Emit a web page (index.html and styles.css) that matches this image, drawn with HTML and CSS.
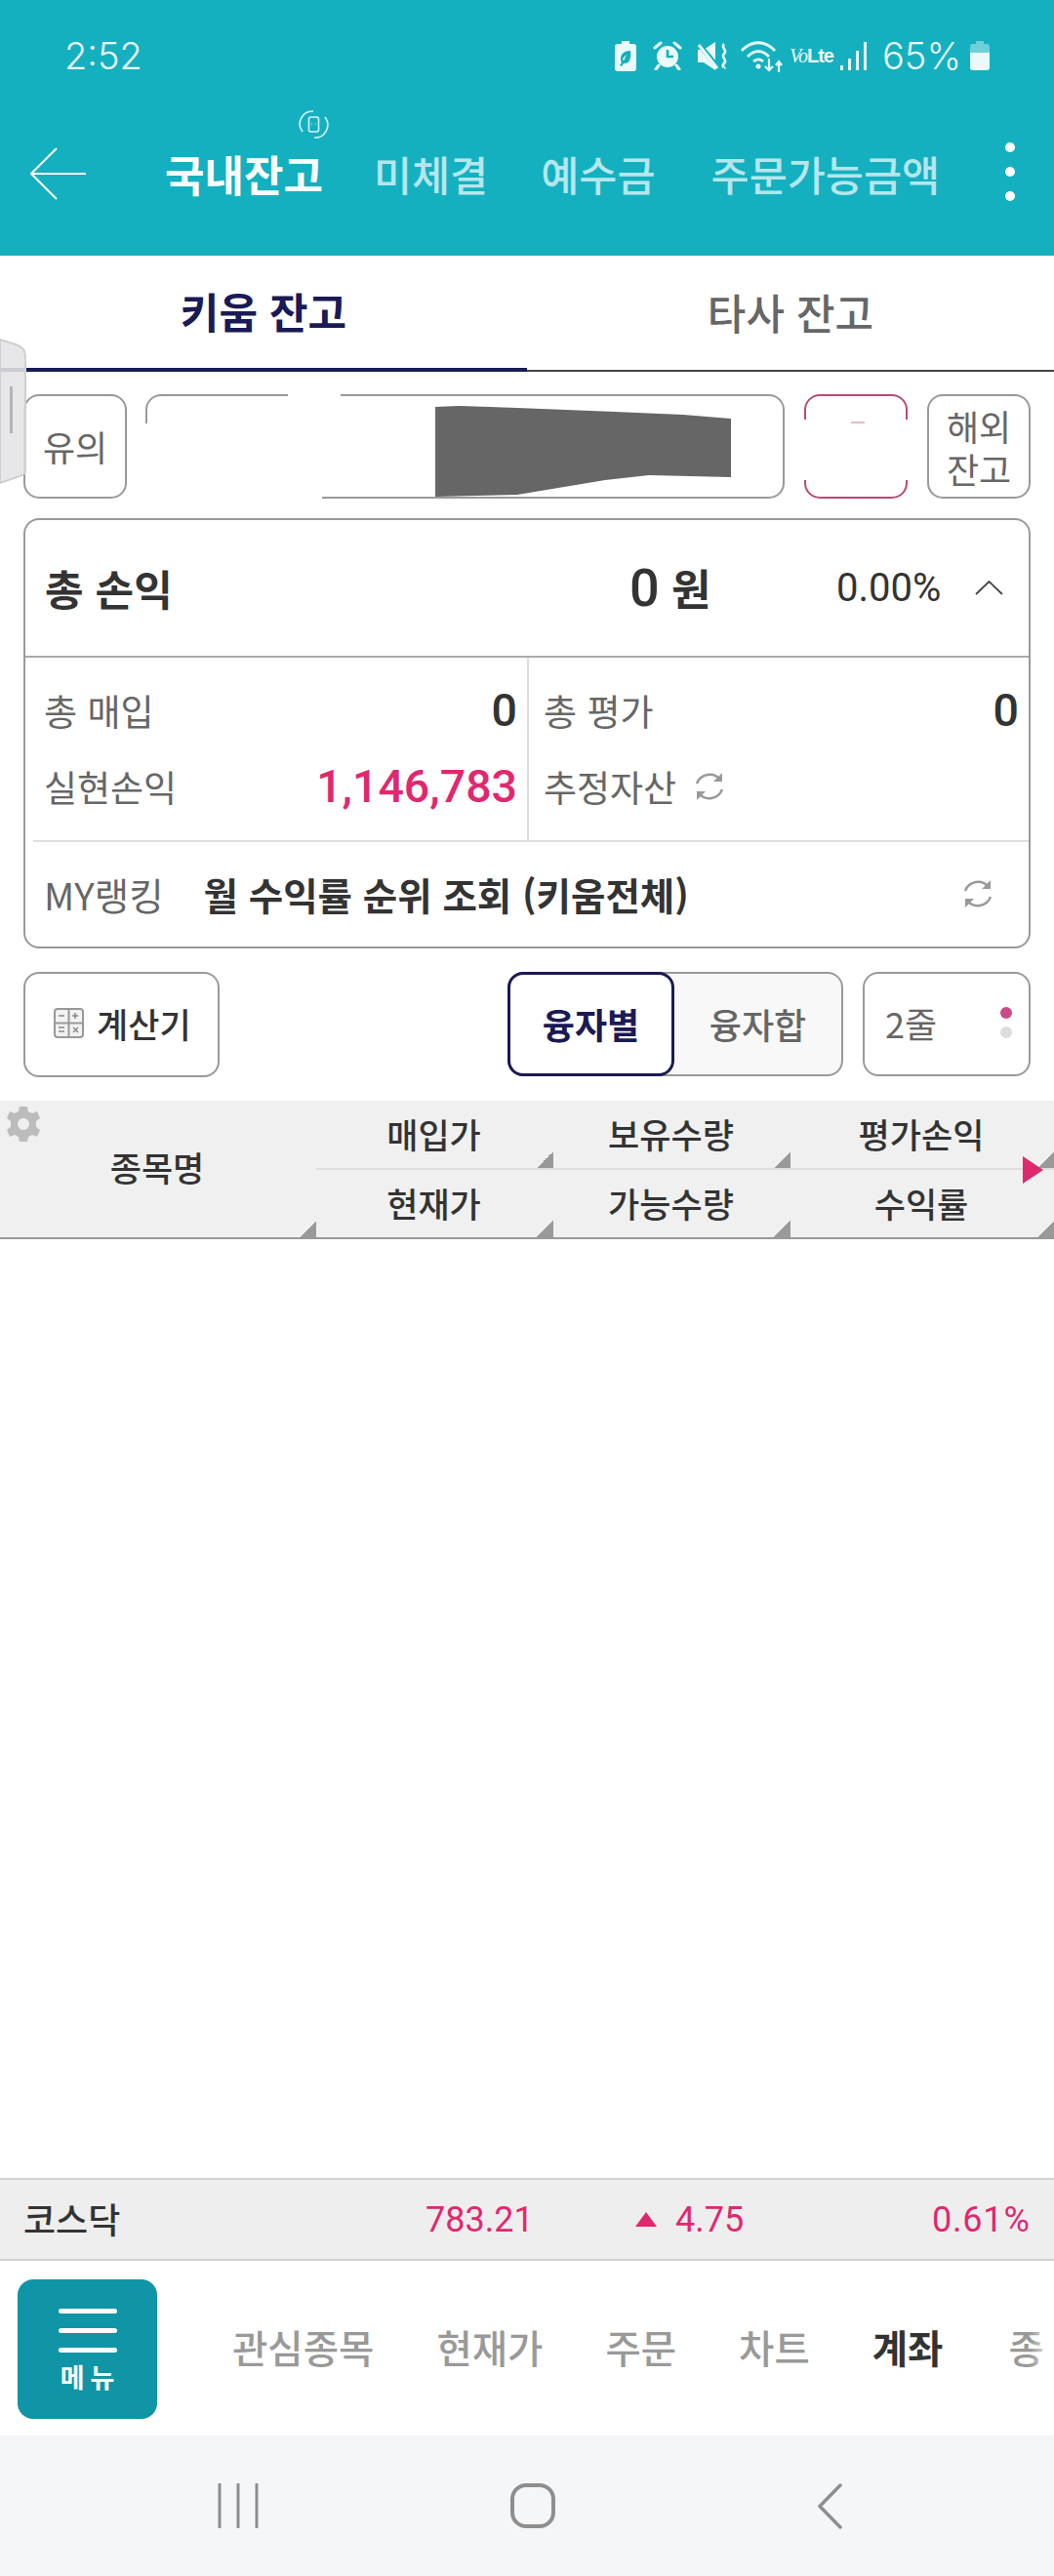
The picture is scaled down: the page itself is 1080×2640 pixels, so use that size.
FILE: index.html
```html
<!DOCTYPE html>
<html lang="ko">
<head>
<meta charset="utf-8">
<title>국내잔고</title>
<link rel="stylesheet" href="styles.css">
</head>
<body>
<div class="app">
  <header class="top">
    <div class="status">
      <span class="clock">2:52</span>
      <div class="status-icons">
        <svg class="si-batt" width="22" height="31" viewBox="0 0 22 31"><path fill="#eafafb" d="M7 0h8v3h4a3 3 0 0 1 3 3v22a3 3 0 0 1-3 3H3a3 3 0 0 1-3-3V6a3 3 0 0 1 3-3h4z"/><path fill="#14b0c0" d="M16 10c-6 0-10 3-10 8 0 1 0 3 1 4l-2 3 2 1 2-3c6 1 8-5 7-13z"/><path fill="#eafafb" d="M13 14c-3 1-5 3-5 6l2-1c0-2 1-4 3-5z"/></svg>
        <svg class="si-alarm" width="30" height="30" viewBox="0 0 30 30"><circle cx="15" cy="16" r="11" fill="#eafafb"/><path d="M15 9v7h6" fill="none" stroke="#14b0c0" stroke-width="2.6"/><path d="M2 7l6-5M28 7l-6-5M6 25l-3 4M24 25l3 4" stroke="#eafafb" stroke-width="3" fill="none" stroke-linecap="round"/></svg>
        <svg class="si-mute" width="30" height="29" viewBox="0 0 30 29"><path fill="#eafafb" d="M0 8h6L18 0v29L6 21H0z"/><path d="M0 1l21 25" stroke="#14b0c0" stroke-width="5"/><path d="M1 3l19 24" stroke="#eafafb" stroke-width="3"/><path d="M27 2c-4 4 4 6 0 10s4 6 0 10 2 4 0 5" fill="none" stroke="#eafafb" stroke-width="2.6"/></svg>
        <svg class="si-wifi" width="43" height="33" viewBox="0 0 43 33"><g fill="none" stroke="#eafafb" stroke-width="2.8"><path d="M1 11c10-11 24-11 34 0"/><path d="M7 17c7-7 15-7 22 0"/><path d="M13 22c4-3 7-3 10 0"/></g><circle cx="18" cy="27" r="2.5" fill="#eafafb"/><path d="M29 19v12m-4-4l4 4 4-4M39 33V22m-3 4l3-4 3 4" fill="none" stroke="#eafafb" stroke-width="2.2"/></svg>
        <span class="volte"><i>Vo</i><b>Lte</b></span>
        <svg class="si-signal" width="28" height="29" viewBox="0 0 28 29"><rect x="0" y="24" width="3" height="5" fill="#eafafb"/><rect x="8" y="17" width="3" height="12" fill="#eafafb"/><rect x="16" y="9" width="3" height="20" fill="#eafafb"/><rect x="24" y="0" width="3" height="29" fill="#eafafb"/></svg>
        <span class="pct">65%</span>
        <svg class="si-level" width="20" height="30" viewBox="0 0 20 30"><path fill="#6fd0da" d="M6 0h8v3h3a3 3 0 0 1 3 3v6H0V6a3 3 0 0 1 3-3h3z"/><path fill="#eafafb" d="M0 12h20v15a3 3 0 0 1-3 3H3a3 3 0 0 1-3-3z"/></svg>
      </div>
    </div>
    <nav class="nav">
      <svg class="back" width="57" height="54" viewBox="0 0 57 54"><path d="M27 1L1 27l26 26M1 27h56" fill="none" stroke="#fff" stroke-width="2"/></svg>
      <a class="nav-item on">국내잔고</a>
      <a class="nav-item">미체결</a>
      <a class="nav-item n3">예수금</a>
      <a class="nav-item">주문가능금액</a>
      <div class="kebab"><i></i><i></i><i></i></div>
    </nav>
    <svg class="rotate" width="31" height="29" viewBox="0 0 31 29"><g fill="none" stroke="#d8f3f6" stroke-width="1.6"><path d="M4 22A13 13 0 0 1 15 1"/><path d="M27 7a13 13 0 0 1-11 21"/><rect x="10.500" y="7" width="10" height="15" rx="2"/></g><path d="M13 14h1M17 14h1" stroke="#d8f3f6"/></svg>
  </header>

  <div class="tabs">
    <div class="tab on">키움 잔고</div>
    <div class="tab">타사 잔고</div>
  </div>

  <div class="handle"><svg width="28" height="150" viewBox="0 0 28 150"><path d="M0 1l16 5q10 3 10 12v118q0 3-6 5L0 148z" fill="#e4e4e6" fill-opacity=".88" stroke="#cfcfcf" stroke-width="2"/><rect x="10" y="49" width="3" height="48" fill="#b4b4b4"/></svg></div>

  <main class="content">
    <div class="acct-row">
      <button class="btn b-warn">유의</button>
      <div class="acct">
        <svg class="redact" width="659" height="115" viewBox="0 0 659 115"><path fill="#fff" d="M146 0h54v14h-54zM0 30h8v44H0zM0 86h181v29H0zM0 74h100v14H0z"/><path fill="#666" d="M297 13l24-1 60 2 100 4 70 3 49 4v60l-84-2-45 5-90 15-84 2z"/></svg>
      </div>
      <div class="red-box"><i class="red-mask"></i><i class="red-dash"></i></div>
      <button class="btn b-abroad">해외<br>잔고</button>
    </div>

    <section class="card">
      <div class="card-head">
        <span class="total-label">총 손익</span>
        <span class="total-val"><b>0</b> 원</span>
        <span class="total-pct">0.00%</span>
        <svg class="caret" width="29" height="15" viewBox="0 0 29 15"><path d="M1 14L14.500 1 28 14" fill="none" stroke="#444" stroke-width="1.800"/></svg>
      </div>
      <div class="card-grid">
        <div class="cell">
          <div class="line"><span class="lab">총 매입</span><b class="num">0</b></div>
          <div class="line"><span class="lab">실현손익</span><b class="num pink">1,146,783</b></div>
        </div>
        <div class="cell cell-r">
          <div class="line"><span class="lab">총 평가</span><b class="num">0</b></div>
          <div class="line"><span class="lab">추정자산</span>
            <svg class="refresh-s" width="34" height="32" viewBox="0 0 34 32"><g fill="none" stroke="#999" stroke-width="2.400"><path d="M4 13A14 14 0 0 1 28 9"/><path d="M30 19A14 14 0 0 1 6 23"/></g><path d="M30 2v9h-9zM4 30v-9h9z" fill="#999"/></svg>
            <span class="spacer"></span>
          </div>
        </div>
      </div>
      <div class="rank">
        <span class="lab lab-my">MY랭킹</span>
        <b class="rank-text">월 수익률 순위 조회 (키움전체)</b>
        <svg class="refresh" width="34" height="32" viewBox="0 0 34 32"><g fill="none" stroke="#999" stroke-width="2.400"><path d="M4 13A14 14 0 0 1 28 9"/><path d="M30 19A14 14 0 0 1 6 23"/></g><path d="M30 2v9h-9zM4 30v-9h9z" fill="#999"/></svg>
      </div>
    </section>

    <div class="tools">
      <button class="btn b-calc">
        <svg width="31" height="31" viewBox="0 0 31 31"><rect x="1" y="1" width="29" height="29" rx="3" fill="#f2f2f2" stroke="#999" stroke-width="2"/><path d="M1 15.500h29M15.500 1v29" stroke="#999" stroke-width="2"/><path d="M5 8h6M19 8h6M22 5v6M5 20h6M5 24h6M20 20l5 5M25 20l-5 5" stroke="#888" stroke-width="1.500"/></svg>
        계산기
      </button>
      <div class="seg">
        <div class="seg-on">융자별</div>
        <div class="seg-off">융자합</div>
      </div>
      <div class="lines-btn">
        <span>2줄</span>
        <div class="pager"><i class="p-on"></i><i></i></div>
      </div>
    </div>
  </main>

  <div class="thead">
    <svg class="gear" width="34" height="36" viewBox="0 0 34 36"><path fill="#bcbcbc" fill-rule="evenodd" d="M13 0h8l1 5 4 2 5-2 3 7-4 3v6l4 3-3 7-5-2-4 2-1 5h-8l-1-5-4-2-5 2-3-7 4-3v-6L0 12l3-7 5 2 4-2zM17 12a6 6 0 1 0 0 12 6 6 0 0 0 0-12z"/></svg>
    <div class="th th-name">종목명<i class="corner"></i></div>
    <div class="th th-up">매입가<i class="corner"></i></div>
    <div class="th th-up">보유수량<i class="corner"></i></div>
    <div class="th th-up th-last">평가손익<i class="corner"></i></div>
    <div class="th">현재가<i class="corner"></i></div>
    <div class="th">가능수량<i class="corner"></i></div>
    <div class="th th-last">수익률<i class="corner"></i></div>
    <i class="more"></i>
  </div>

  <div class="empty"></div>

  <div class="index">
    <span class="idx-name">코스닥</span>
    <span class="idx-val">783.21</span>
    <i class="idx-up"></i>
    <span class="idx-chg">4.75</span>
    <span class="idx-pct">0.61%</span>
  </div>

  <div class="menu-bar">
    <div class="menu-btn"><i></i><i></i><i></i><span>메뉴</span></div>
    <div class="menu-tabs">
      <span>관심종목</span><span>현재가</span><span>주문</span><span>차트</span><span class="cur">계좌</span><span>종</span>
    </div>
    <i class="menu-fade"></i>
  </div>

  <div class="sysnav">
    <svg width="42" height="46" viewBox="0 0 42 46"><path d="M2 1v44M21 1v44M40 1v44" stroke="#8e8e8e" stroke-width="3" stroke-linecap="round"/></svg>
    <svg width="46" height="46" viewBox="0 0 46 46"><rect x="2" y="2" width="42" height="42" rx="14" fill="none" stroke="#8e8e8e" stroke-width="4"/></svg>
    <svg width="26" height="47" viewBox="0 0 26 47"><path d="M24 2L3 23.500 24 45" fill="none" stroke="#8e8e8e" stroke-width="3.500" stroke-linecap="round" stroke-linejoin="round"/></svg>
  </div>
</div>
</body>
</html>
```
FILE: styles.css
```css
* { box-sizing: border-box; }
html, body { margin: 0; padding: 0; background: #fff; }
body { font-family: "Noto Sans CJK KR", "Noto Sans", Roboto, sans-serif; color: #333; }
button { font: inherit; background: #fff; padding: 0; }
i { font-style: normal; }

.app { position: relative; width: 1080px; height: 2640px; display: flex; flex-direction: column; overflow: hidden; }

/* header */
.top { position: relative; height: 262px; flex: none; background: #14b0c0; color: #fff; }
.status { height: 114px; display: flex; align-items: center; justify-content: space-between; padding: 0 66px; }
.clock { font-family: Inter, sans-serif; font-size: 38px; font-weight: 300; color: #eafafb; }
.status-icons { display: flex; align-items: center; color: #eafafb; }
.si-batt { margin-right: 17px; }
.si-alarm { margin-right: 16px; }
.si-mute { margin-right: 14px; }
.si-wifi { margin-right: 7px; }
.volte { width: 41px; font-family: "Liberation Sans", sans-serif; font-size: 20px; margin-right: 11px; white-space: nowrap; letter-spacing: -1px; }
.volte i { font-family: "Liberation Serif", serif; font-style: italic; font-weight: 400; }
.pct { font-family: Inter, sans-serif; font-size: 38px; font-weight: 300; margin: 0 9px 0 15px; }
.nav { height: 128px; display: flex; align-items: center; padding-left: 31px; position: relative; }
.back { margin-right: 81px; flex: none; }
.nav-item { font-size: 42.5px; line-height: 1; font-weight: 500; color: #b5e6ec; margin-right: 54px; white-space: nowrap; }
.nav-item.n3 { margin-right: 57px; }
.nav-item.on { color: #fff; font-weight: 700; font-size: 44px; margin-right: 52px; }
.kebab { position: absolute; left: 1030px; top: 32px; display: flex; flex-direction: column; gap: 15px; }
.kebab i { width: 10px; height: 10px; border-radius: 50%; background: #fff; }
.rotate { position: absolute; left: 306px; top: 113px; }

/* tabs */
.tabs { display: flex; height: 119px; flex: none; }
.tab { flex: 1; display: flex; align-items: center; justify-content: center; font-size: 43px; font-weight: 500; color: #666; border-bottom: 2px solid #444; padding-bottom: 4px; }
.tab.on { color: #1a1a55; font-weight: 700; border-bottom: 4px solid #1a1a55; }
.handle { position: absolute; left: 0; top: 347px; width: 28px; height: 150px; z-index: 3; line-height: 0; }

/* content */
.content { flex: none; padding: 23px 24px 0; }
.btn { border: 2px solid #999; border-radius: 16px; color: #666; }
.acct-row { display: flex; height: 107px; }
.b-warn { width: 106px; font-size: 36px; margin-right: 19px; padding-bottom: 2px; }
.acct { position: relative; width: 655px; border: 2px solid #999; border-radius: 16px; margin-right: 20px; }
.redact { position: absolute; left: -2px; top: -2px; }
.red-box { position: relative; width: 106px; border: 2px solid #b84a78; border-radius: 16px; margin-right: 20px; }
.red-mask { position: absolute; left: -4px; right: -4px; top: 24px; height: 62px; background: #fff; }
.red-dash { position: absolute; left: 46px; top: 26px; width: 14px; height: 2px; background: #e8b8cc; }
.b-abroad { width: 106px; font-size: 36px; line-height: 44px; }

.card { margin-top: 20px; height: 441px; border: 2px solid #999; border-radius: 16px; display: flex; flex-direction: column; }
.card-head { height: 141px; flex: none; display: flex; align-items: center; border-bottom: 2px solid #aaa; padding-left: 20px; position: relative; }
.total-label { width: 601px; font-size: 43px; font-weight: 700; color: #333; white-space: nowrap; padding-bottom: 2px; }
.total-val { width: 210px; font-size: 44px; font-weight: 700; color: #333; white-space: nowrap; padding-bottom: 2px; margin-left: -2px; margin-right: 2px; }
.total-val b { font-family: Roboto, sans-serif; font-size: 54px; font-weight: 500; }
.total-pct { width: 142px; font-family: Roboto, sans-serif; font-size: 40px; color: #333; }
.caret { flex: none; }
.card-grid { height: 187px; flex: none; display: grid; grid-template-columns: 516px 1fr; }
.cell { display: flex; flex-direction: column; padding: 18px 10px 0 19px; gap: 6px; border-right: 2px solid #ddd; }
.cell-r { border-right: 0; padding: 18px 10px 0 15px; }
.line { display: flex; align-items: center; justify-content: space-between; height: 72px; }
.lab { font-size: 37px; color: #666; white-space: nowrap; }
.lab-my { font-size: 38.5px; }
.num { font-family: Roboto, sans-serif; font-size: 46.5px; font-weight: 500; color: #333; }
.num.pink { color: #e0286f; }
.refresh-s { margin-left: 17px; }
.spacer { flex: 1; }
.rank { flex: 1; display: flex; align-items: center; margin-left: 8px; padding-left: 11px; padding-bottom: 2px; border-top: 2px solid #ddd; }
.rank-text { font-size: 38.5px; font-weight: 700; color: #333; margin-left: 41px; white-space: nowrap; }
.refresh { margin-left: 279px; }

.tools { display: flex; margin-top: 24px; height: 108px; }
.b-calc { width: 201px; display: flex; align-items: center; gap: 13px; padding-left: 29px; padding-bottom: 3px; font-size: 35px; font-weight: 500; color: #333; margin-right: 295px; white-space: nowrap; }
.seg { width: 344px; display: flex; margin-right: 20px; height: 107px; background: #f8f8f8; border: 2px solid #999; border-radius: 16px; font-size: 36px; }
.seg-on { width: 171px; margin: -2px 0 -2px -2px; flex: none; display: flex; align-items: center; justify-content: center; background: #fff; color: #1a1a55; font-weight: 700; border: 3px solid #1a1a55; border-radius: 16px; padding-bottom: 2px; }
.seg-off { flex: 1; display: flex; align-items: center; justify-content: center; color: #666; font-weight: 500; padding-bottom: 2px; }
.lines-btn { width: 172px; height: 107px; border: 2px solid #999; border-radius: 16px; display: flex; align-items: center; justify-content: space-between; padding: 0 17px 3px 21px; font-size: 36px; color: #666; }
.pager { display: flex; flex-direction: column; gap: 8px; }
.pager i { width: 12px; height: 12px; border-radius: 50%; background: #ddd; }
.pager .p-on { background: #c94a85; }

/* table head */
.thead { position: relative; margin-top: 24px; height: 142px; flex: none; background: #f0f0f0; border-bottom: 2px solid #999; display: grid; grid-template-columns: 324px 243px 243px 270px; grid-template-rows: 71px 69px; }
.gear { position: absolute; left: 7px; top: 6px; }
.th { position: relative; display: flex; align-items: center; justify-content: center; font-size: 35px; font-weight: 500; color: #333; padding-bottom: 3px; padding-right: 2px; }
.th-name { grid-row: 1 / 3; grid-column: 1; order: -1; padding-bottom: 6px; }
.th-up { border-bottom: 2px solid #ddd; }
.corner { position: absolute; right: 0; bottom: 0; width: 17px; height: 17px; background: linear-gradient(135deg, transparent 50%, #999 50%); }
.more { position: absolute; left: 1048px; top: 57px; width: 21px; height: 28px; background: #e0286f; clip-path: polygon(0 0, 100% 50%, 0 100%); }

.empty { flex: 1; }

/* index */
.index { height: 85px; flex: none; background: #eee; border-top: 2px solid #d2d2d2; border-bottom: 2px solid #d2d2d2; display: flex; align-items: center; padding-left: 24px; color: #e0286f; font-family: Roboto, sans-serif; font-size: 36px; }
.idx-name { width: 412px; font-family: "Noto Sans CJK KR", sans-serif; font-weight: 500; font-size: 36px; color: #333; padding-bottom: 3px; }
.idx-val { width: 215px; }
.idx-up { width: 22px; height: 15px; background: #e0286f; clip-path: polygon(50% 0, 100% 100%, 0 100%); margin-right: 19px; }
.idx-chg { width: 263px; }
.idx-pct { letter-spacing: .8px; }

/* bottom menu */
.menu-bar { height: 179px; flex: none; display: flex; padding-left: 18px; background: #fff; position: relative; overflow: hidden; }
.menu-btn { margin-top: 19px; width: 143px; height: 143px; flex: none; background: #1095a6; border-radius: 16px; display: flex; flex-direction: column; align-items: center; padding-top: 30px; color: #fff; }
.menu-btn i { width: 60px; height: 5px; background: #fff; border-radius: 3px; margin-bottom: 15px; }
.menu-btn span { font-size: 27px; font-weight: 700; line-height: 1; letter-spacing: 6px; margin-top: -4px; margin-right: -6px; }
.menu-tabs { display: flex; align-items: center; margin-left: 77px; gap: 64px; height: 160px; font-size: 39.5px; color: #999; white-space: nowrap; padding-top: 14px; font-weight: 500; }
.menu-tabs .cur { color: #333; font-weight: 700; }
.menu-tabs span:last-child { margin-left: 3px; }
.menu-fade { position: absolute; right: 0; top: 0; bottom: 0; width: 24px; background: linear-gradient(90deg, rgba(255,255,255,0), #fff); }

.sysnav { height: 144px; flex: none; background: #f5f6f8; display: grid; grid-template-columns: 223px 300px 314px auto; align-items: center; }
.sysnav svg:nth-child(1) { grid-column: 2; }
.sysnav svg:nth-child(2) { grid-column: 3; }
.sysnav svg:nth-child(3) { grid-column: 4; }
```
